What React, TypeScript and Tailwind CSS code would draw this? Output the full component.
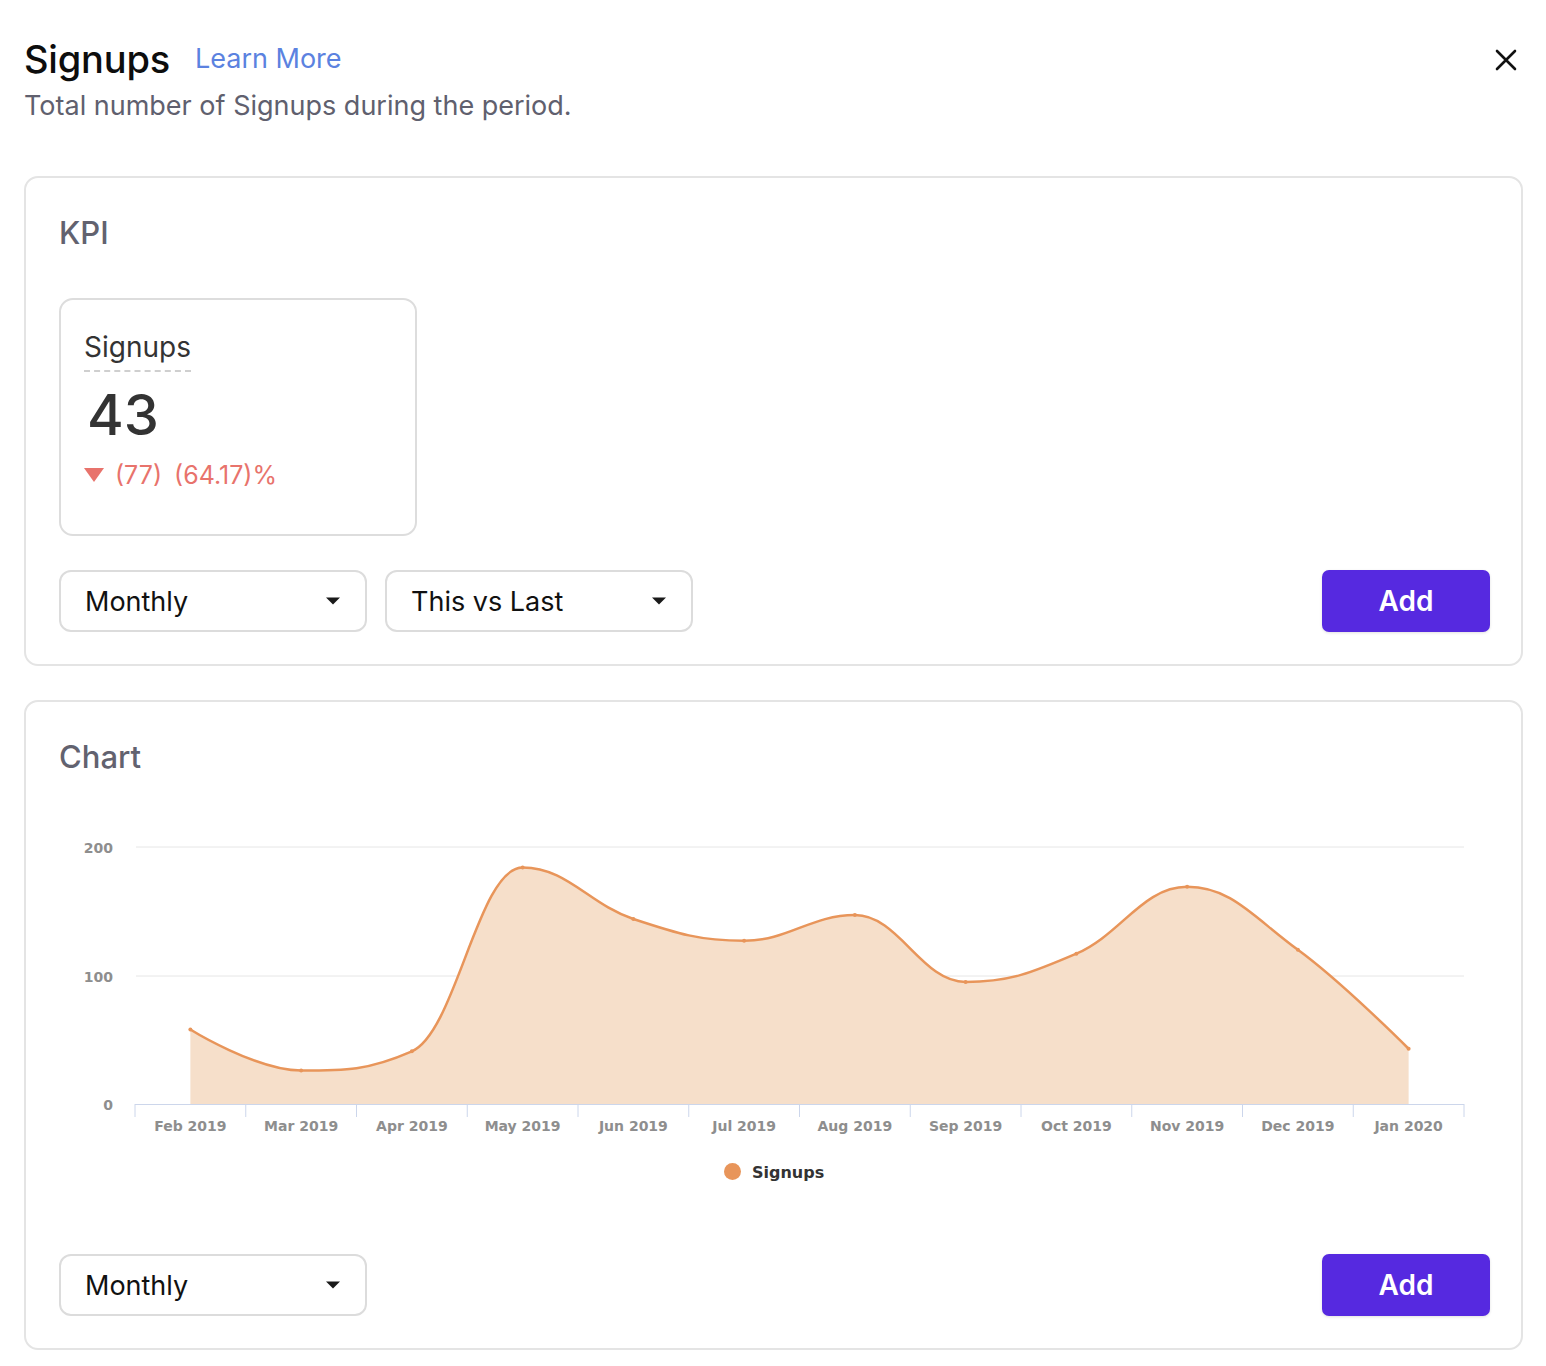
import React from "react";

const months = ["Feb 2019","Mar 2019","Apr 2019","May 2019","Jun 2019","Jul 2019","Aug 2019","Sep 2019","Oct 2019","Nov 2019","Dec 2019","Jan 2020"];
const values = [58, 26, 41, 184, 144, 127, 147, 95, 117, 169, 120, 43];

// svg coords: origin at page (59, 800)
const X0 = 135 - 59;
const X1 = 1464 - 59;
const Y0 = 1104 - 800;
const SCALE = 257 / 200;
const CW = (X1 - X0) / 12;

function splinePath(pts: { x: number; y: number }[]) {
  const sm = 1.5;
  const den = sm + 1;
  const conts = pts.map((p, i) => {
    if (i === 0 || i === pts.length - 1) return null;
    const l = pts[i - 1];
    const n = pts[i + 1];
    const lcx = (sm * p.x + l.x) / den;
    let lcy = (sm * p.y + l.y) / den;
    const rcx = (sm * p.x + n.x) / den;
    let rcy = (sm * p.y + n.y) / den;
    if (rcx !== lcx) {
      const c = ((rcy - lcy) * (rcx - p.x)) / (rcx - lcx) + p.y - rcy;
      lcy += c;
      rcy += c;
      if (lcy > l.y && lcy > p.y) {
        lcy = Math.max(l.y, p.y);
        rcy = 2 * p.y - lcy;
      } else if (lcy < l.y && lcy < p.y) {
        lcy = Math.min(l.y, p.y);
        rcy = 2 * p.y - lcy;
      }
      if (rcy > n.y && rcy > p.y) {
        rcy = Math.max(n.y, p.y);
        lcy = 2 * p.y - rcy;
      } else if (rcy < n.y && rcy < p.y) {
        rcy = Math.min(n.y, p.y);
        lcy = 2 * p.y - rcy;
      }
    }
    return { lcx, lcy, rcx, rcy };
  });
  let d = `M ${pts[0].x} ${pts[0].y}`;
  for (let i = 1; i < pts.length; i++) {
    const prev = pts[i - 1];
    const pc = conts[i - 1];
    const cc = conts[i];
    const c1x = pc ? pc.rcx : prev.x;
    const c1y = pc ? pc.rcy : prev.y;
    const c2x = cc ? cc.lcx : pts[i].x;
    const c2y = cc ? cc.lcy : pts[i].y;
    d += ` C ${c1x} ${c1y} ${c2x} ${c2y} ${pts[i].x} ${pts[i].y}`;
  }
  return d;
}

function Chart() {
  const pts = values.map((v, i) => ({ x: X0 + CW * (i + 0.5), y: Y0 - v * SCALE }));
  const line = splinePath(pts);
  const area = `${line} L ${pts[pts.length - 1].x} ${Y0} L ${pts[0].x} ${Y0} Z`;
  const font = { fontFamily: '"DejaVu Sans", "Open Sans", sans-serif' };
  return (
    <svg width={1431} height={400} viewBox="0 0 1431 400" className="block">
      <line x1={X0 + 1} x2={X1} y1={47} y2={47} stroke="#e6e6e6" strokeWidth={1} />
      <line x1={X0 + 1} x2={X1} y1={176} y2={176} stroke="#e6e6e6" strokeWidth={1} />
      <path d={area} fill="#f6dfca" />
      <line x1={X0} x2={X1} y1={Y0 + 0.5} y2={Y0 + 0.5} stroke="#ccd6eb" strokeWidth={1} />
      {Array.from({ length: 13 }).map((_, i) => (
        <line key={i} x1={X0 + CW * i} x2={X0 + CW * i} y1={Y0} y2={Y0 + 13} stroke="#ccd6eb" strokeWidth={1} />
      ))}
      <path d={line} fill="none" stroke="#e8955a" strokeWidth={2.5} strokeLinejoin="round" strokeLinecap="round" />
      {pts.map((p, i) => (
        <circle key={i} cx={p.x} cy={p.y} r={2} fill="#e8955a" />
      ))}
      {[
        ["200", 52.5],
        ["100", 181.5],
        ["0", 309.5],
      ].map(([t, y]) => (
        <text key={t as string} x={54} y={y as number} textAnchor="end" fontSize={14} fontWeight={700} fill="#8e8e8e" style={font}>
          {t}
        </text>
      ))}
      {months.map((m, i) => (
        <text key={m} x={X0 + CW * (i + 0.5)} y={331} textAnchor="middle" fontSize={14} fontWeight={700} fill="#8e8e8e" style={font}>
          {m}
        </text>
      ))}
      <circle cx={673.5} cy={371.5} r={8.5} fill="#e8955a" />
      <text x={693} y={378} fontSize={16} fontWeight={700} fill="#333333" style={font}>
        Signups
      </text>
    </svg>
  );
}

function Caret() {
  return (
    <svg width="16" height="8" viewBox="0 0 16 8" className="block">
      <path d="M1 0.5 L15 0.5 L8 7.5 Z" fill="#1a1a1a" />
    </svg>
  );
}

function Select({ label }: { label: string }) {
  return (
    <button className="flex h-[62px] w-[308px] items-center justify-between rounded-[12px] border-2 border-[#dcdcdc] bg-white pl-[24px] pr-[24px] text-[27px] leading-none text-[#111111]">
      <span>{label}</span>
      <Caret />
    </button>
  );
}

function AddButton() {
  return (
    <button className="flex h-[62px] w-[168px] items-center justify-center rounded-[7px] bg-[#5629e0] text-[28px] font-semibold leading-none text-white shadow-[0_1px_3px_rgba(0,0,0,0.12)]">
      Add
    </button>
  );
}

export default function App() {
  return (
    <div className="min-h-[1366px] bg-white" style={{ fontFamily: 'Inter, "Noto Sans", sans-serif' }}>
      <div className="flex items-start justify-between pl-[24px] pr-[29px] pt-[37px]">
        <div>
          <div className="flex items-center">
            <h1 className="text-[38px] font-medium leading-[44px] tracking-[-0.2px] text-[#0d0d0d]">Signups</h1>
            <a className="ml-[25px] mt-[-1px] text-[27px] leading-[36px] text-[#5b82e0]">Learn More</a>
          </div>
          <p className="mt-[9px] text-[27px] leading-[32px] text-[#60606e]">Total number of Signups during the period.</p>
        </div>
        <button className="mt-[12px]">
          <svg width="22" height="22" viewBox="0 0 22 22">
            <path d="M2 2 L20 20 M20 2 L2 20" stroke="#111" strokeWidth="2.6" strokeLinecap="round" />
          </svg>
        </button>
      </div>

      <div className="ml-[24px] mr-[23px] mt-[54px] rounded-[14px] border-2 border-[#e4e4e4] pb-[32px] pl-[33px] pr-[31px] pt-[35px]">
        <h2 className="text-[31px] font-medium leading-[40px] text-[#62626f]">KPI</h2>
        <div className="mt-[45px] h-[238px] w-[358px] rounded-[14px] border-2 border-[#dddddd] pl-[23px] pt-[29px]">
          <div className="inline-block border-b-2 border-dashed border-[#cfcfcf] pb-[5px] text-[28px] leading-[36px] text-[#333333]">
            Signups
          </div>
          <div className="ml-[3px] mt-[15px] text-[56px] font-medium leading-[56px] text-[#333333]">43</div>
          <div className="mt-[16px] flex items-center text-[25px] leading-[32px] text-[#e8736c]">
            <svg width="20" height="14" viewBox="0 0 20 14" className="mr-[11px]">
              <path d="M0 0 L20 0 L10 14 Z" fill="#e8736c" />
            </svg>
            <span>(77)</span>
            <span className="ml-[12px]">(64.17)%</span>
          </div>
        </div>
        <div className="mt-[34px] flex items-center justify-between">
          <div className="flex gap-[18px]">
            <Select label="Monthly" />
            <Select label="This vs Last" />
          </div>
          <AddButton />
        </div>
      </div>

      <div className="ml-[24px] mr-[23px] mt-[34px] rounded-[14px] border-2 border-[#e4e4e4] pb-[32px] pl-[33px] pr-[31px] pt-[35px]">
        <h2 className="text-[31px] font-medium leading-[40px] text-[#62626f]">Chart</h2>
        <div className="mt-[23px]">
          <Chart />
        </div>
        <div className="mt-[54px] flex items-center justify-between">
          <Select label="Monthly" />
          <AddButton />
        </div>
      </div>
    </div>
  );
}
